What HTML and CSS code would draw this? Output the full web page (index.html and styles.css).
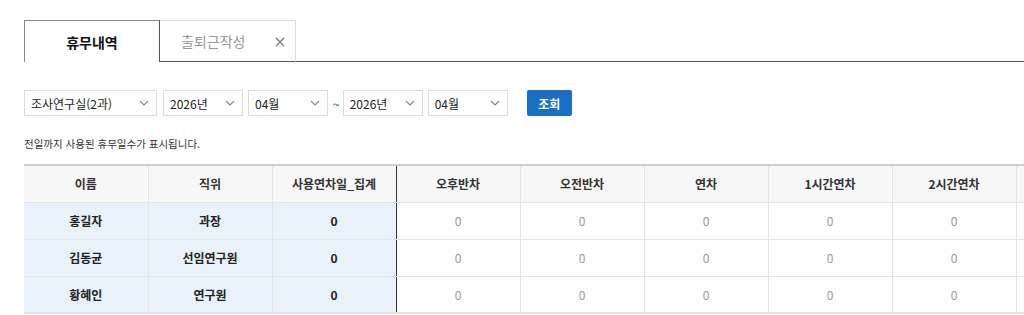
FILE: index.html
```html
<!DOCTYPE html>
<html lang="ko">
<head>
<meta charset="utf-8">
<link rel="stylesheet" href="styles.css">
</head>
<body>
<div class="page">
  <div class="tabs">
    <div class="tab active">휴무내역</div>
    <div class="tab">출퇴근작성<svg class="close" viewBox="0 0 10 10"><path d="M1 1l8 8M9 1l-8 8" stroke="#777" stroke-width="1.3" fill="none"/></svg></div>
    <div class="tab-fill"></div>
  </div>

  <div class="filters">
    <div class="select w1"><span>조사연구실(2과)</span><svg class="chev" viewBox="0 0 10 6"><path d="M1 1l4 4 4-4" fill="none" stroke="#888" stroke-width="1.2"/></svg></div>
    <div class="select w2"><span>2026년</span><svg class="chev" viewBox="0 0 10 6"><path d="M1 1l4 4 4-4" fill="none" stroke="#888" stroke-width="1.2"/></svg></div>
    <div class="select w2"><span>04월</span><svg class="chev" viewBox="0 0 10 6"><path d="M1 1l4 4 4-4" fill="none" stroke="#888" stroke-width="1.2"/></svg></div>
    <span class="tilde">~</span>
    <div class="select w2"><span>2026년</span><svg class="chev" viewBox="0 0 10 6"><path d="M1 1l4 4 4-4" fill="none" stroke="#888" stroke-width="1.2"/></svg></div>
    <div class="select w2"><span>04월</span><svg class="chev" viewBox="0 0 10 6"><path d="M1 1l4 4 4-4" fill="none" stroke="#888" stroke-width="1.2"/></svg></div>
    <button class="btn">조회</button>
  </div>

  <p class="note">전일까지 사용된 휴무일수가 표시됩니다.</p>

  <table class="grid">
    <colgroup>
      <col class="c"><col class="c"><col class="c"><col class="c"><col class="c"><col class="c"><col class="c"><col class="c"><col>
    </colgroup>
    <thead>
      <tr>
        <th>이름</th><th>직위</th><th class="sum">사용연차일_집계</th>
        <th>오후반차</th><th>오전반차</th><th>연차</th><th>1시간연차</th><th>2시간연차</th><th class="cut"></th>
      </tr>
    </thead>
    <tbody>
      <tr><td class="key">홍길자</td><td class="key">과장</td><td class="key sum">0</td><td>0</td><td>0</td><td>0</td><td>0</td><td>0</td><td class="cut"></td></tr>
      <tr><td class="key">김동균</td><td class="key">선임연구원</td><td class="key sum">0</td><td>0</td><td>0</td><td>0</td><td>0</td><td>0</td><td class="cut"></td></tr>
      <tr><td class="key">황혜인</td><td class="key">연구원</td><td class="key sum">0</td><td>0</td><td>0</td><td>0</td><td>0</td><td>0</td><td class="cut"></td></tr>
    </tbody>
  </table>
</div>
</body>
</html>
```

FILE: styles.css
```css
* { box-sizing: border-box; }
html, body { margin: 0; padding: 0; background: #fff; overflow: hidden; }
body {
  font-family: "Noto Sans CJK KR", "Noto Sans", "Liberation Sans", sans-serif;
  color: #222;
  width: 1024px;
  height: 315px;
}
.page { padding: 20px 0 0 24px; }

.tabs { display: flex; height: 42px; }
.tab {
  width: 136px;
  height: 42px;
  display: flex;
  align-items: center;
  justify-content: center;
  font-size: 14px;
  color: #999;
  border: 1px solid #ddd;
  border-bottom: 1px solid #555;
  border-left: none;
  position: relative;
}
.tab .close {
  position: absolute;
  right: 10px;
  top: 16px;
  width: 10px;
  height: 10px;
}
.tab.active {
  color: #111;
  font-weight: bold;
  border: 1px solid #888;
  border-right: 1px solid #555;
  border-bottom: none;
}
.tab:not(.active) { justify-content: flex-start; padding-left: 21px; }
.tab-fill { flex: 1; border-bottom: 1px solid #555; }

.filters {
  display: flex;
  align-items: center;
  margin-top: 28px;
  height: 26px;
}
.select {
  height: 26px;
  border: 1px solid #ddd;
  background: #fff;
  display: flex;
  align-items: center;
  justify-content: space-between;
  padding: 0 7px 0 6px;
  font-size: 12px;
  color: #222;
  margin-right: 5px;
}
.select.w1 { width: 133px; margin-right: 6px; }
.select.w2 { width: 80px; }
.chev { width: 10px; height: 6px; }
.tilde { font-size: 12px; color: #444; margin: 0 3px 0 0; }
.btn {
  margin-left: 14px;
  width: 45px;
  height: 26px;
  border: none;
  border-radius: 2px;
  background: #1b6fc2;
  color: #fff;
  font-family: inherit;
  font-size: 12px;
  font-weight: bold;
  padding: 0;
}

.note {
  margin: 20px 0 0 0;
  font-size: 10.5px;
  color: #333;
  line-height: 16px;
}

.grid {
  margin-top: 12px;
  border-collapse: collapse;
  table-layout: fixed;
  width: 1010px;
  border-top: 2px solid #cfcfcf;
  font-size: 12px;
}
.grid col.c { width: 124px; }
.grid th, .grid td {
  height: 37px;
  text-align: center;
  border: 1px solid #e4e4e4;
  border-top: none;
  padding: 0;
}
.grid th.cut, .grid td.cut { border-right: none; }
.grid th:first-child, .grid td:first-child { border-left: none; }
.grid th {
  background: #f7f7f7;
  font-weight: bold;
  color: #333;
}
.grid td { color: #999; background: #fff; }
.grid td.key {
  background: #e9f1fa;
  color: #222;
  font-weight: bold;
}
.grid .sum { border-left: 1px solid #333; border-right: 1px solid #333; }
.grid tbody tr:last-child td { border-bottom: 2px solid #e4e4e4; }
```
